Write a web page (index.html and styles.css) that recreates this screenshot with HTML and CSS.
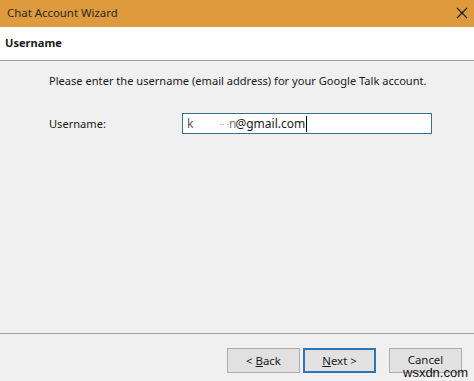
FILE: index.html
```html
<!DOCTYPE html>
<html>
<head>
<meta charset="utf-8">
<link rel="stylesheet" href="styles.css">
</head>
<body>
<div class="window">
  <div class="titlebar">
    <span class="title">Chat Account Wizard</span>
    <svg class="close" width="12" height="12" viewBox="0 0 12 12"><path d="M1 1L11 11M11 1L1 11" stroke="#1a1a1a" stroke-width="1.1"/></svg>
  </div>
  <div class="header">Username</div>
  <div class="content">
    <p class="intro">Please enter the username (email address) for your Google Talk account.</p>
    <div class="row">
      <label class="label">Username:</label>
      <div class="input"><span class="val"><span class="blur">k</span><span class="gap"></span><span class="blur2">·· ·</span><span class="blur3">n</span>@gmail.com</span><span class="caret"></span></div>
    </div>
  </div>
  <div class="footer">
    <div class="btn"><span>&lt; <u>B</u>ack</span></div>
    <div class="btn primary"><span><u>N</u>ext &gt;</span></div>
    <div class="btn cancel"><span>Cancel</span></div>
    <span class="watermark">wsxdn.com</span>
  </div>
</div>
</body>
</html>
```
FILE: styles.css
```css
html, body {
  margin: 0;
  padding: 0;
  background: #f0f0f0;
}
.window {
  width: 474px;
  height: 381px;
  display: flex;
  flex-direction: column;
  font-family: "Noto Sans", "Open Sans", sans-serif;
  font-size: 11.1px;
  color: #1a1a1a;
  background: #f0f0f0;
  overflow: hidden;
}
.titlebar {
  height: 27px;
  background: #de9a3c;
  display: flex;
  align-items: center;
  justify-content: space-between;
  padding: 0 6px 3px 7px;
  box-sizing: border-box;
}
.title {
  font-size: 11.4px;
  color: #2a2a2a;
}
.close {
  margin-top: 2px;
}
.header {
  height: 30px;
  background: #fff;
  border-bottom: 1px solid #a0a0a0;
  display: flex;
  align-items: center;
  padding-left: 5px;
  padding-bottom: 3px;
  box-sizing: content-box;
  font-weight: bold;
  font-size: 11.1px;
}
.content {
  flex: 1;
  padding: 12px 0 0 49px;
  border-bottom: 1px solid #a0a0a0;
}
.intro {
  margin: 0;
  line-height: 16px;
}
.row {
  display: flex;
  align-items: center;
  margin-top: 24px;
}
.label {
  width: 133px;
}
.input {
  width: 244px;
  height: 19px;
  border: 1px solid #3c6f8e;
  background: #fff;
  display: flex;
  align-items: center;
  padding-left: 4px;
  font-size: 12px;
}
.val {
  white-space: pre;
}
.blur {
  color: #555;
}
.gap {
  display: inline-block;
  width: 26px;
}
.blur2 {
  color: #999;
  font-size: 9px;
}
.blur3 {
  color: #777;
  letter-spacing: -1px;
}
.caret {
  display: inline-block;
  width: 1px;
  height: 16px;
  background: #000;
  margin-left: 1px;
}
.footer {
  height: 47px;
  display: flex;
  align-items: flex-start;
  justify-content: flex-end;
  padding: 14px 12px 0 0;
  box-sizing: border-box;
  position: relative;
}
.btn {
  width: 73px;
  height: 25px;
  box-sizing: border-box;
  border: 1px solid #adadad;
  background: #e1e1e1;
  display: flex;
  align-items: center;
  justify-content: center;
  margin-left: 3px;
  font-size: 11.4px;
}
.btn.primary {
  border: 2px solid #2c75b8;
}
.btn.cancel {
  margin-left: 13px;
  align-items: flex-start;
  padding-top: 3px;
}
.watermark {
  position: absolute;
  left: 403px;
  top: 32px;
  font-size: 13px;
  line-height: 14px;
  color: #111;
  font-family: "Liberation Sans", Arial, sans-serif;
}
```
